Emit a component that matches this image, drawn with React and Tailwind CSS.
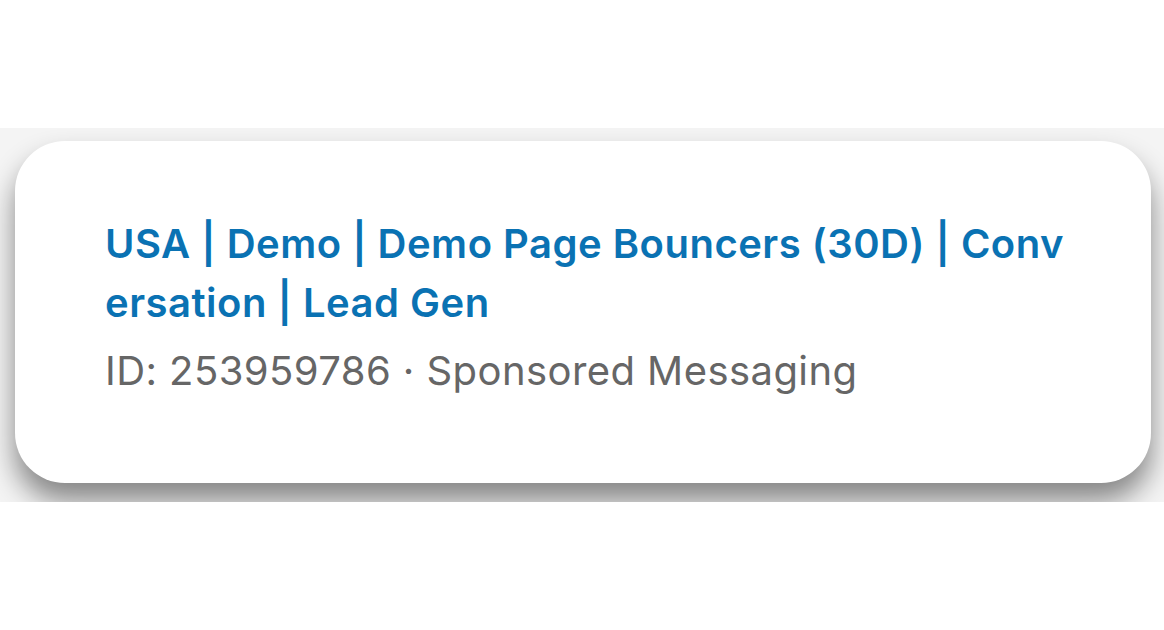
export default function App() {
  return (
    <div className="w-[1164px] h-[630px] bg-white overflow-hidden" style={{ fontFamily: 'Inter, "Noto Sans", sans-serif' }}>
      <div className="h-[128px]" />
      <div className="h-[374px] bg-[#f4f4f4] overflow-hidden pt-[13px] pl-[15px] pr-[13px]">
        <div className="h-[342px] bg-white rounded-[50px] shadow-[0_18px_28px_rgba(0,0,0,0.45)] pl-[90px] pr-[80px] pt-[73px]">
          <div className="text-[40px] leading-[59px] font-semibold tracking-[0.5px] text-[#0a72b3] break-all">
            USA | Demo | Demo Page Bouncers (30D) | Conversation | Lead Gen
          </div>
          <div className="mt-[15px] text-[40px] leading-[48px] tracking-[0.43px] text-[#666666]">
            ID: 253959786 · Sponsored Messaging
          </div>
        </div>
      </div>
    </div>
  );
}
